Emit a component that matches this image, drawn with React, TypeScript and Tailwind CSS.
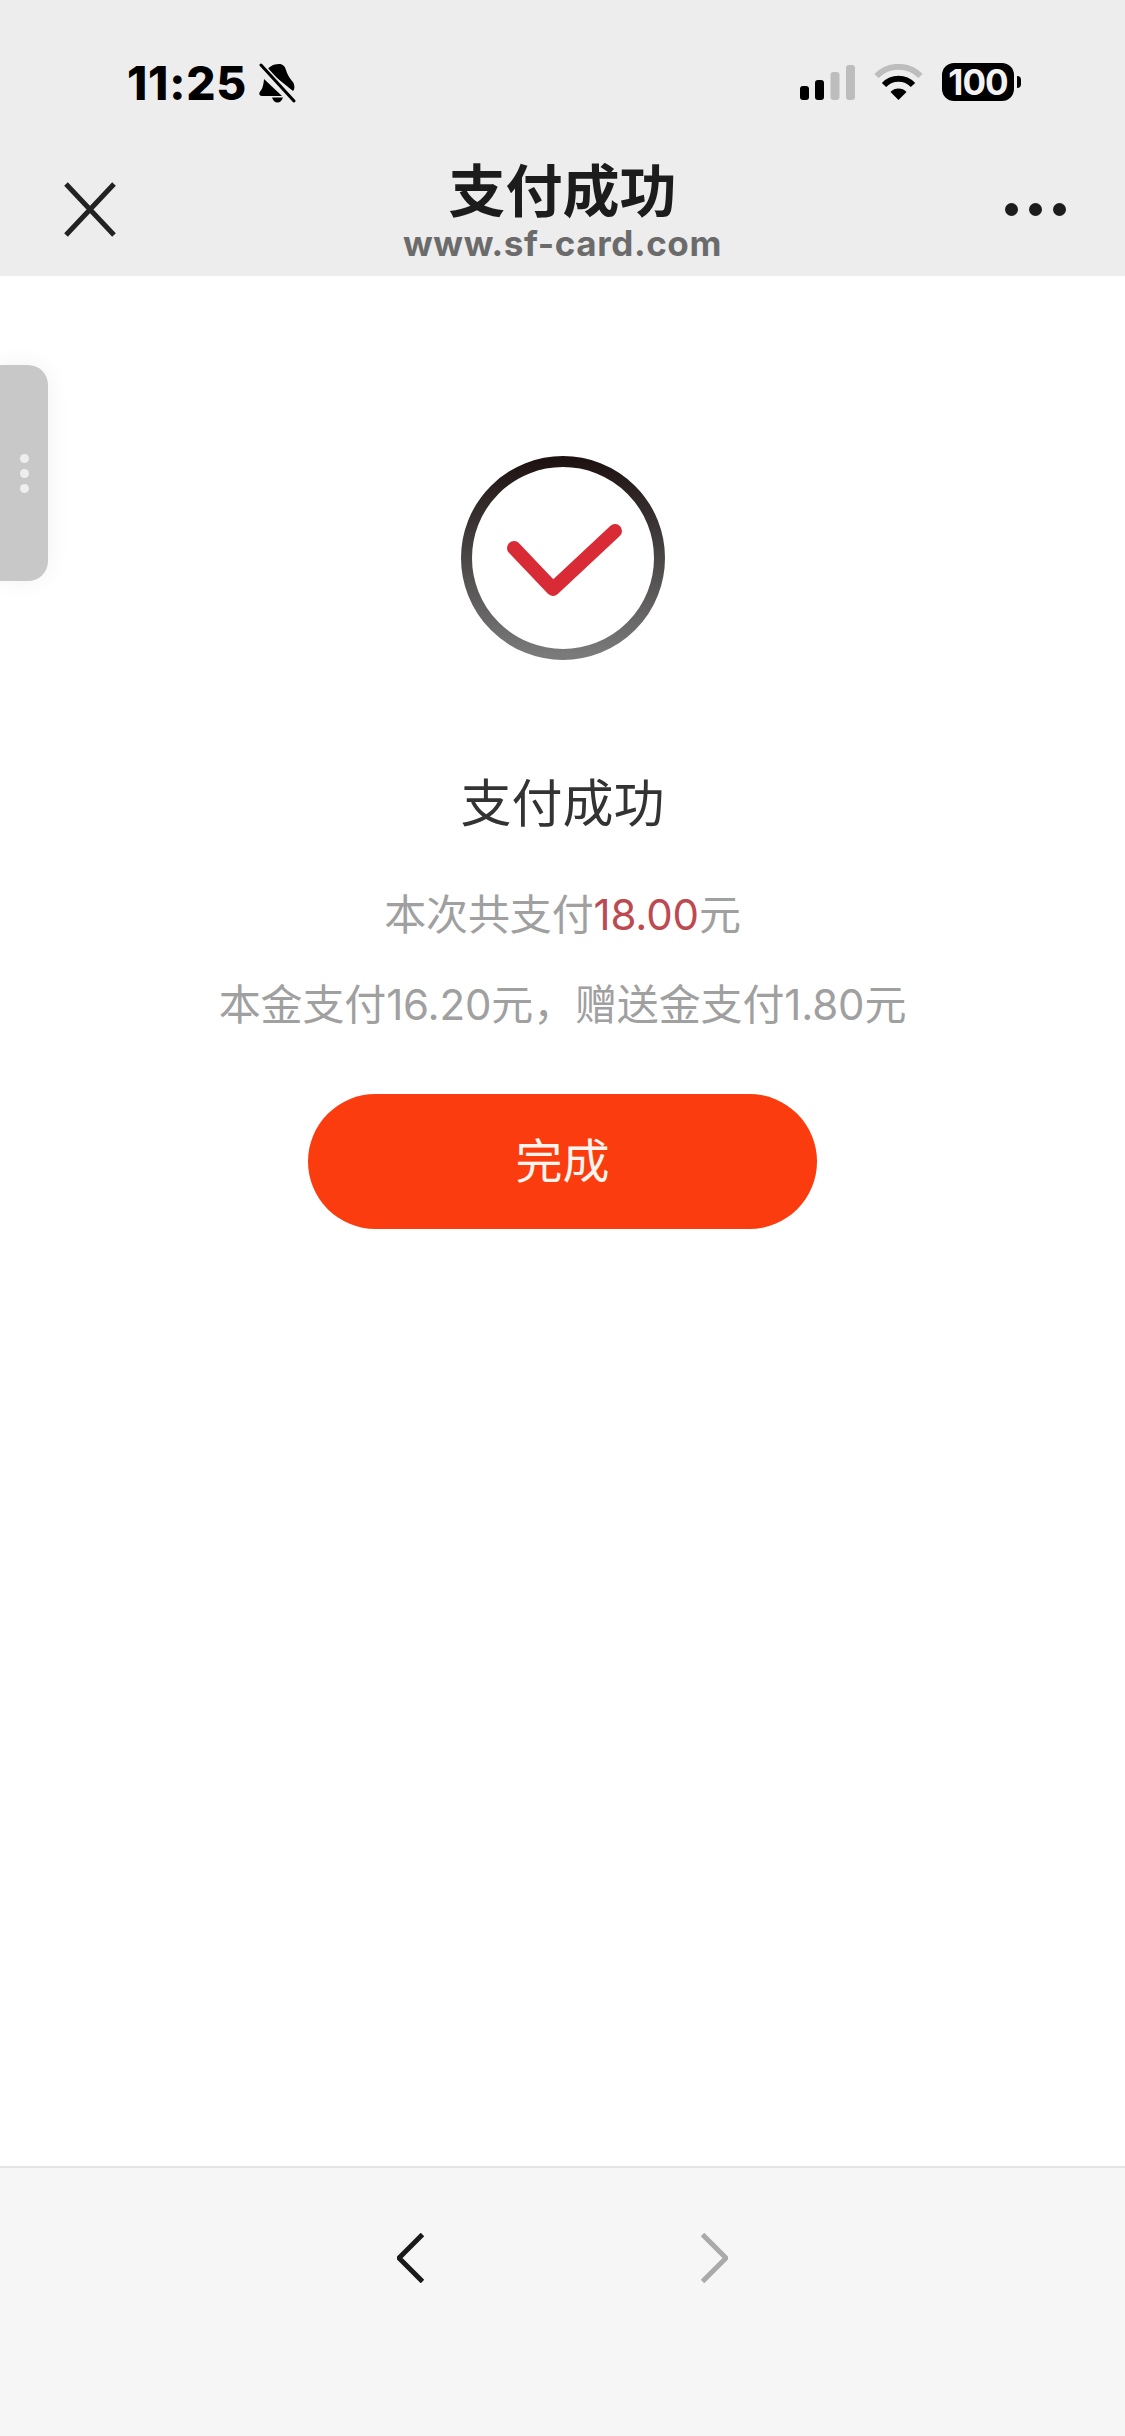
import React from 'react';

const CJK = "font-['Inter','Noto_Sans_CJK_SC',sans-serif]";

const BellOff = () => (
    <svg width="37" height="40" viewBox="0 0 37 40">
        <path
            d="M20 1c4 0 6 2.500 7 6 1 4 3 7 6 11 3 3 3 8 1 10L8 7c2-3 6-6 12-6zM5 16l18 17H3c-3 0-3.500-3-1.500-5 2-2.500 3-6 3.500-12zM13 34.500h11c-1 3-3 5-5.500 5s-4.500-2-5.500-5z"
            fill="#000"
        />
        <path d="M2 2l33 36" stroke="#ededed" strokeWidth="6" />
        <path d="M2 2l33 36" stroke="#000" strokeWidth="3" strokeLinecap="round" />
    </svg>
);

const Signal = () => (
    <svg width="55" height="35" viewBox="0 0 55 35">
        <rect x="0" y="21" width="9" height="14" rx="3" fill="#000" />
        <rect x="15" y="15" width="9" height="20" rx="3" fill="#000" />
        <rect x="30.500" y="7" width="9" height="28" rx="3" fill="#bdbdbd" />
        <rect x="46" y="0" width="9" height="35" rx="3" fill="#bdbdbd" />
    </svg>
);

const Wifi = () => (
    <svg width="49" height="36" viewBox="0 0 49 36" fill="none">
        <path d="M2.500 12a31 31 0 0 1 44 0" stroke="#bdbdbd" strokeWidth="6" />
        <path d="M10 21a20 20 0 0 1 29 0" stroke="#000" strokeWidth="6" />
        <path d="M24.500 36L16.500 28a11 11 0 0 1 16 0z" fill="#000" />
    </svg>
);

const Battery = () => (
    <div className="flex items-center gap-[3px]">
        <div className="flex h-[38px] w-[72px] items-center justify-center rounded-[12px] bg-black font-['Inter',sans-serif] text-[35px] font-bold tracking-[-1px] text-[#f2f2f2]">
            100
        </div>
        <div className="h-[12px] w-[4px] rounded-r-full bg-black" />
    </div>
);

const SuccessIcon = () => (
    <svg width="204" height="204" viewBox="0 0 204 204" fill="none">
        <defs>
            <linearGradient id="ring" x1="0" y1="0" x2="0" y2="1">
                <stop offset="0" stopColor="#1f1212" />
                <stop offset="0.5" stopColor="#4a4646" />
                <stop offset="1" stopColor="#7a7a7a" />
            </linearGradient>
        </defs>
        <circle cx="102" cy="102" r="96.500" stroke="url(#ring)" strokeWidth="11" />
        <path
            d="M53 92l39 41 62-58"
            stroke="#d92b35"
            strokeWidth="14"
            strokeLinecap="round"
            strokeLinejoin="round"
        />
    </svg>
);

const App: React.FC = () => {
    return (
        <div className={`relative flex h-[2436px] w-[1125px] flex-col overflow-hidden bg-white ${CJK}`}>
            <header className="h-[276px] shrink-0 bg-[#ededed]">
                <div className="flex h-[162px] items-start justify-between pl-[127px] pr-[104px] pt-[63px]">
                    <div className="flex items-center gap-[12px]">
                        <span className="font-['Inter',sans-serif] text-[46px] font-extrabold leading-[40px] tracking-[0.8px] text-black">
                            11:25
                        </span>
                        <BellOff />
                    </div>
                    <div className="flex items-center gap-[19px]">
                        <Signal />
                        <Wifi />
                        <Battery />
                    </div>
                </div>
                <div className="flex items-start">
                    <div className="w-[200px] pl-[64px] pt-[20px]">
                        <svg width="52" height="55" viewBox="0 0 52 55" fill="none">
                            <path d="M2 2l48 51M50 2L2 53" stroke="#222" strokeWidth="5" />
                        </svg>
                    </div>
                    <div className="flex flex-1 flex-col items-center">
                        <div className="text-[57px] font-bold leading-[60px] text-[#1c1c1c]">支付成功</div>
                        <div className="mt-[1px] font-['Inter',sans-serif] text-[35px] font-bold leading-[40px] tracking-[0.6px] text-[#6b6b6b]">
                            www.sf-card.com
                        </div>
                    </div>
                    <div className="flex w-[200px] justify-end gap-[11px] pr-[59px] pt-[41px]">
                        <div className="size-[13px] rounded-full bg-[#1c1c1c]" />
                        <div className="size-[13px] rounded-full bg-[#1c1c1c]" />
                        <div className="size-[13px] rounded-full bg-[#1c1c1c]" />
                    </div>
                </div>
            </header>

            {/* floating tab on the left edge */}
            <div className="absolute left-0 top-[365px] flex h-[216px] w-[48px] flex-col items-center justify-center gap-[6px] rounded-r-[20px] bg-[#c8c8c8] shadow-[0_0_24px_rgba(0,0,0,0.06)]">
                <div className="size-[9px] rounded-full bg-[#eeeeee]" />
                <div className="size-[9px] rounded-full bg-[#eeeeee]" />
                <div className="size-[9px] rounded-full bg-[#eeeeee]" />
            </div>

            <main className="flex flex-1 flex-col items-center pt-[180px]">
                <SuccessIcon />
                <div className="mt-[114px] text-[51px] leading-[60px] text-[#333333]">支付成功</div>
                <div className="mt-[56px] text-[42px] leading-[50px] tracking-[-0.15px] text-[#a0a0a0]">
                    本次共支付<span className="text-[#bc4a50]">18.00</span>元
                </div>
                <div className="mt-[40px] text-[42px] leading-[50px] tracking-[-0.15px] text-[#a0a0a0]">
                    本金支付16.20元，赠送金支付1.80元
                </div>
                <button className="mt-[64px] h-[135px] w-[509px] rounded-full bg-[#fb3c0e] text-[47px] text-[#fff5ee]">
                    完成
                </button>
            </main>

            <footer className="flex h-[270px] shrink-0 items-start justify-center gap-[277px] border-t-2 border-[#e4e4e4] bg-[#f6f6f6] pt-[65px]">
                <svg width="27" height="50" viewBox="0 0 27 50" fill="none">
                    <path d="M25.500 1.500L2 25l23.500 23.500" stroke="#1a1a1a" strokeWidth="5" />
                </svg>
                <svg width="27" height="50" viewBox="0 0 27 50" fill="none">
                    <path d="M1.500 1.500L25 25 1.500 48.500" stroke="#aaaaaa" strokeWidth="5" />
                </svg>
            </footer>
        </div>
    );
};

export default App;
